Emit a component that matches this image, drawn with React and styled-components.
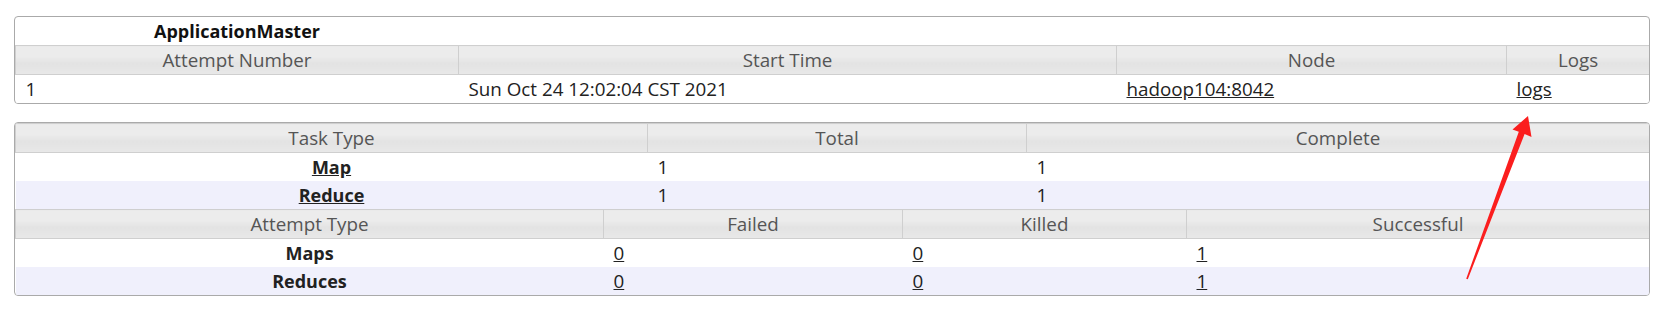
import React from 'react'
import styled, { createGlobalStyle } from 'styled-components';

const GlobalStyle = createGlobalStyle`
    body {
        margin: 0;
        background: #fff;
        font-family: "Open Sans", "Liberation Sans", sans-serif;
    }
`;

const attempts = [{ number: '1', start: 'Sun Oct 24 12:02:04 CST 2021', node: 'hadoop104:8042' }];

const tasks = [
    { type: 'Map', total: '1', complete: '1' },
    { type: 'Reduce', total: '1', complete: '1' },
];

const attemptTypes = [
    { type: 'Maps', failed: '0', killed: '0', successful: '1' },
    { type: 'Reduces', failed: '0', killed: '0', successful: '1' },
];

export default function App() {
    return (
        <Page>
            <GlobalStyle />
            <Panel>
                <Table>
                    <colgroup>
                        <col style={{ width: 443 }} />
                        <col style={{ width: 658 }} />
                        <col style={{ width: 390 }} />
                        <col style={{ width: 143 }} />
                    </colgroup>
                    <thead>
                        <tr>
                            <Caption>ApplicationMaster</Caption>
                            <Caption />
                            <Caption />
                            <Caption />
                        </tr>
                        <tr>
                            <Head>Attempt Number</Head>
                            <Head>Start Time</Head>
                            <Head>Node</Head>
                            <Head>Logs</Head>
                        </tr>
                    </thead>
                    <tbody>
                        {attempts.map(a => (
                            <Row key={a.number}>
                                <Cell>{a.number}</Cell>
                                <Cell>{a.start}</Cell>
                                <Cell><Link href="#">{a.node}</Link></Cell>
                                <Cell><Link href="#">logs</Link></Cell>
                            </Row>
                        ))}
                    </tbody>
                </Table>
            </Panel>

            <Panel>
                <Table>
                    <colgroup>
                        <col style={{ width: 632 }} />
                        <col style={{ width: 379 }} />
                        <col style={{ width: 623 }} />
                    </colgroup>
                    <thead>
                        <tr>
                            <Head>Task Type</Head>
                            <Head>Total</Head>
                            <Head>Complete</Head>
                        </tr>
                    </thead>
                    <tbody>
                        {tasks.map((t, i) => (
                            <Row key={t.type} $alt={i % 2 === 1}>
                                <Cell $center $bold><Link href="#">{t.type}</Link></Cell>
                                <Cell>{t.total}</Cell>
                                <Cell>{t.complete}</Cell>
                            </Row>
                        ))}
                    </tbody>
                </Table>
                <Table>
                    <colgroup>
                        <col style={{ width: 588 }} />
                        <col style={{ width: 299 }} />
                        <col style={{ width: 284 }} />
                        <col style={{ width: 463 }} />
                    </colgroup>
                    <thead>
                        <tr>
                            <Head>Attempt Type</Head>
                            <Head>Failed</Head>
                            <Head>Killed</Head>
                            <Head>Successful</Head>
                        </tr>
                    </thead>
                    <tbody>
                        {attemptTypes.map((t, i) => (
                            <Row key={t.type} $alt={i % 2 === 1}>
                                <Cell $center $bold>{t.type}</Cell>
                                <Cell><Link href="#">{t.failed}</Link></Cell>
                                <Cell><Link href="#">{t.killed}</Link></Cell>
                                <Cell><Link href="#">{t.successful}</Link></Cell>
                            </Row>
                        ))}
                    </tbody>
                </Table>
            </Panel>

            <Arrow viewBox="0 0 1664 327" width="1664" height="327">
                <polygon
                    fill="#fb1e1e"
                    points="1528,116 1531.5,137 1524.6,134 1467.8,279.3 1466.2,278.7 1518.8,131.8 1512.5,129.5"
                />
            </Arrow>
        </Page>
    );
}

const Page = styled.div`
    position: relative;
    width: 1664px;
    height: 327px;
    box-sizing: border-box;
    padding: 16px 14px 0 14px;
    overflow: hidden;
`;

const Panel = styled.div`
    border: 1px solid #aaa;
    border-radius: 4px;
    overflow: hidden;
    background: #fff;

    & + & {
        margin-top: 18px;
    }
`;

const Table = styled.table`
    width: 100%;
    border-collapse: collapse;
    table-layout: fixed;
    font-size: 18.8px;
`;

const Caption = styled.th`
    height: 28px;
    padding: 0;
    text-align: center;
    font-size: 18px;
    font-weight: bold;
    color: #111;
`;

const Head = styled.th`
    height: 28px;
    padding: 0;
    border: 1px solid #cfcfcf;
    background: linear-gradient(to bottom, #ececec 0%, #ececec 35%, #e3e3e3 60%, #e8e8e8 100%);
    color: #555;
    font-weight: normal;
    text-align: center;
    white-space: nowrap;
`;

const Row = styled.tr`
    background: ${p => (p.$alt ? '#f0f0fc' : '#fff')};
`;

const Cell = styled.td`
    height: 28px;
    padding: 0 10px;
    color: #222;
    white-space: nowrap;
    text-align: ${p => (p.$center ? 'center' : 'left')};
    font-size: ${p => (p.$bold ? '18px' : 'inherit')};
    font-weight: ${p => (p.$bold ? 'bold' : 'normal')};
`;

const Link = styled.a`
    color: #222;
    text-decoration: underline;
`;

const Arrow = styled.svg`
    position: absolute;
    left: 0;
    top: 0;
    pointer-events: none;
`;
